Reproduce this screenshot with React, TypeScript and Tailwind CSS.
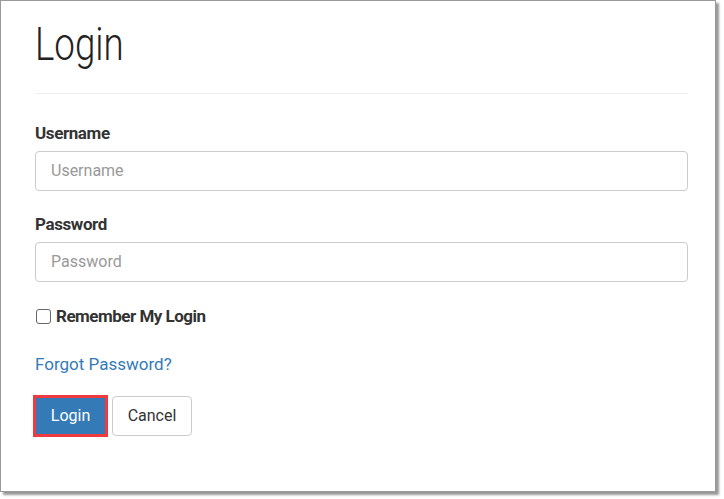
import React from "react";

export default function App() {
  const font = { fontFamily: "Roboto, 'Liberation Sans', sans-serif" };
  return (
    <div className="w-[724px] h-[499px] bg-white" style={font}>
      <div className="w-[716px] h-[492px] border border-[#9a9a9a] bg-white shadow-[3px_3px_2px_rgba(0,0,0,0.4)] box-border">
        <div className="flex flex-col pl-[34px] w-[687px]">
          <h1 className="mt-[20px] h-[46px] leading-[46px] text-[47px] font-light text-[#222] origin-left scale-x-[0.78] w-max">Login</h1>
          <div className="mt-[26px] h-px bg-[#eeeeee]" />
          <label className="mt-[28px] h-[22px] leading-[22px] text-[17px] font-bold text-[#333] tracking-[-0.4px]">Username</label>
          <div className="mt-[7px] h-[40px] border border-[#cccccc] rounded-[4px] flex items-center pl-[15px] text-[16px] text-[#999]">Username</div>
          <label className="mt-[22px] h-[22px] leading-[22px] text-[17px] font-bold text-[#333] tracking-[-0.4px]">Password</label>
          <div className="mt-[7px] h-[40px] border border-[#cccccc] rounded-[4px] flex items-center pl-[15px] text-[16px] text-[#999]">Password</div>
          <div className="mt-[23px] h-[22px] flex items-center gap-[5px]">
            <span className="ml-[1px] w-[15px] h-[15px] border border-[#666] rounded-[3px] bg-white" />
            <span className="leading-[22px] text-[17px] font-bold text-[#333] tracking-[-0.5px]">Remember My Login</span>
          </div>
          <div className="mt-[26px] h-[22px] leading-[22px] text-[17px] text-[#337ab7]">Forgot Password?</div>
          <div className="mt-[21px] flex items-center gap-[5px]">
            <button className="ml-[-1px] w-[73px] h-[40px] bg-[#337ab7] text-white text-[16px] outline-[3px] outline-solid outline-[#ef3b40] outline-offset-[-2px]">Login</button>
            <button className="w-[80px] h-[40px] border border-[#cccccc] rounded-[4px] bg-white text-[#333] text-[16px]">Cancel</button>
          </div>
        </div>
      </div>
    </div>
  );
}
